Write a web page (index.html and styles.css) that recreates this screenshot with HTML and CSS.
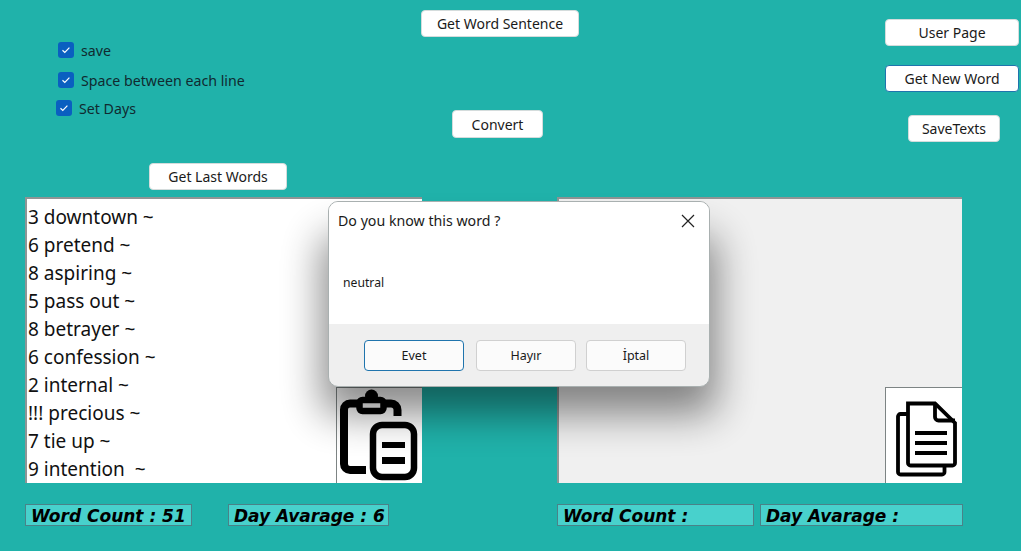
FILE: index.html
```html
<!DOCTYPE html>
<html lang="en">
<head>
  <meta charset="UTF-8" />
  <meta name="viewport" content="width=device-width, initial-scale=1.0" />
  <title>Word Notes</title>
  <link rel="stylesheet" href="styles.css">
</head>
<body>
  <div class="top">
    <div class="top-left">
      <label class="check"><span class="box"><svg viewBox="0 0 16 16"><path d="M4.500 8.300l2.300 2.200 4.600-4.800"/></svg></span>save</label>
      <label class="check check-space"><span class="box"><svg viewBox="0 0 16 16"><path d="M4.500 8.300l2.300 2.200 4.600-4.800"/></svg></span>Space between each line</label>
      <label class="check check-days"><span class="box"><svg viewBox="0 0 16 16"><path d="M4.500 8.300l2.300 2.200 4.600-4.800"/></svg></span>Set Days</label>
      <button class="btn btn-last">Get Last Words</button>
    </div>
    <div class="top-mid">
      <button class="btn btn-sentence">Get Word Sentence</button>
      <button class="btn btn-convert">Convert</button>
    </div>
    <div class="top-right">
      <button class="btn btn-user">User Page</button>
      <button class="btn btn-new">Get New Word</button>
      <button class="btn btn-save">SaveTexts</button>
    </div>
  </div>

  <div class="panels">
    <div class="panel panel-left">
      <div class="words">
        <div>3 downtown ~</div>
        <div>6 pretend ~</div>
        <div>8 aspiring ~</div>
        <div>5 pass out ~</div>
        <div>8 betrayer ~</div>
        <div>6 confession ~</div>
        <div>2 internal ~</div>
        <div>!!! precious ~</div>
        <div>7 tie up ~</div>
        <div>9 intention &nbsp;~</div>
      </div>
      <button class="icon-btn icon-paste">
        <svg viewBox="0 0 85 96" width="85" height="96">
          <path class="thick" d="M24 16.500H14a6 6 0 0 0-6 6V77a6 6 0 0 0 6 6H30M46 16.500H55a6.500 6.500 0 0 1 6.500 6.500V29"/>
          <circle cx="35.500" cy="9" r="6.500"/>
          <rect class="clip" x="23.500" y="13" width="24" height="11" rx="3"/>
          <rect class="sheet" x="37" y="38" width="41" height="52" rx="9"/>
          <rect x="46" y="55" width="23" height="6"/>
          <rect x="46" y="70" width="23" height="7"/>
        </svg>
      </button>
    </div>
    <div class="panel panel-right">
      <button class="icon-btn icon-copy">
        <svg viewBox="0 0 75 94" width="75" height="94">
          <g class="thin">
            <path d="M22 14.500H49L69 34V74a2.500 2.500 0 0 1-2.500 2.500H24.500A2.500 2.500 0 0 1 22 74Z"/>
            <path d="M49 14.500V28a3.500 3.500 0 0 0 3.500 3.500H69"/>
            <path d="M22 25H14.500A2.500 2.500 0 0 0 12 27.500V83a2.500 2.500 0 0 0 2.500 2.500H56a2.500 2.500 0 0 0 2.500-2.500V76.500"/>
            <path d="M29 44H61M29 54H61M29 64H61"/>
          </g>
        </svg>
      </button>
    </div>
  </div>

  <div class="stats">
    <div class="stat stat-a">Word Count : 51</div>
    <div class="stat stat-b">Day Avarage : 6</div>
    <div class="stat stat-c">Word Count :</div>
    <div class="stat stat-d">Day Avarage :</div>
  </div>

  <div class="dialog-shade"></div>
  <div class="dialog">
    <div class="dialog-body">
      <div class="dialog-head">
        <span>Do you know this word ?</span>
        <svg class="close" viewBox="0 0 14 14" width="14" height="14"><path d="M1 1L13 13M13 1L1 13"/></svg>
      </div>
      <p class="dialog-text">neutral</p>
    </div>
    <div class="dialog-foot">
      <button class="dlg-btn dlg-default">Evet</button>
      <button class="dlg-btn">Hayır</button>
      <button class="dlg-btn">İptal</button>
    </div>
  </div>
</body>
</html>
```

FILE: styles.css
```css
body {
  margin: 0;
  height: 551px;
  overflow: hidden;
  position: relative;
  background: #20b2aa;
  font-family: "Noto Sans", "Open Sans", sans-serif;
  color: #111;
}
.top {
  display: flex;
  height: 197px;
}
.top-left {
  width: 421px;
  padding-top: 42px;
  box-sizing: border-box;
}
.top-mid {
  width: 464px;
  padding-top: 10px;
  box-sizing: border-box;
}
.top-right {
  width: 136px;
  padding-top: 19px;
  box-sizing: border-box;
}
.check {
  display: flex;
  align-items: center;
  gap: 7px;
  height: 16px;
  margin-left: 58px;
  font-size: 14.200px;
  color: #102a30;
  white-space: nowrap;
}
.check-space {
  margin-top: 14px;
}
.check-days {
  margin-top: 12px;
  margin-left: 56px;
}
.box {
  width: 16px;
  height: 16px;
  border-radius: 3px;
  background: #0a5fc0;
  flex: none;
}
.box svg {
  display: block;
  width: 16px;
  height: 16px;
}
.box path {
  fill: none;
  stroke: #fff;
  stroke-width: 1.2;
}
.btn {
  display: block;
  box-sizing: border-box;
  height: 27px;
  padding: 0;
  border: 1px solid #d4dcdc;
  border-radius: 4px;
  background: #fff;
  font-family: inherit;
  font-size: 14px;
  color: #1a1a1a;
}
.btn-last {
  width: 138px;
  margin: 47px 0 0 149px;
}
.btn-sentence {
  width: 158px;
  height: 27px;
}
.btn-convert {
  width: 91px;
  height: 28px;
  margin: 73px 0 0 31px;
}
.btn-user {
  width: 134px;
}
.btn-new {
  width: 134px;
  margin-top: 19px;
  border-color: #1f74ad;
}
.btn-save {
  width: 92px;
  margin: 23px 0 0 23px;
}
.panels {
  display: flex;
  gap: 135px;
  height: 286px;
  margin-left: 25px;
}
.panel {
  display: flex;
  justify-content: space-between;
  align-items: flex-end;
  box-sizing: border-box;
  border-top: 2px solid #8f9595;
  border-left: 2px solid #8f9595;
}
.panel-left {
  width: 397px;
  background: #fff;
}
.panel-right {
  width: 405px;
  justify-content: flex-end;
  background: #f0f0f0;
}
.words {
  padding: 0 0 0 1px;
  font-size: 19px;
  line-height: 28px;
  color: #111;
  white-space: nowrap;
}
.icon-btn {
  box-sizing: border-box;
  padding: 0;
  border: 0;
  border-top: 1px solid #7d8484;
  border-left: 1px solid #7d8484;
  background: #fff;
}
.icon-btn svg {
  display: block;
}
.icon-paste {
  width: 86px;
  height: 96px;
}
.icon-paste svg {
  margin: -1px 0 0 -1px;
}
.thick {
  fill: none;
  stroke: #000;
  stroke-width: 8;
}
.clip {
  fill: none;
  stroke: #000;
  stroke-width: 6.500;
}
.sheet {
  fill: none;
  stroke: #000;
  stroke-width: 6.500;
}
.icon-copy {
  width: 77px;
  height: 96px;
}
.thin path {
  fill: none;
  stroke: #000;
  stroke-width: 3.800;
}
.stats {
  display: flex;
  margin: 21px 0 0 25px;
}
.stat {
  box-sizing: border-box;
  height: 22px;
  padding-left: 5px;
  border: 1px solid #4a8288;
  background: #48d1cc;
  font-family: "DejaVu Sans", sans-serif;
  font-size: 17px;
  font-weight: bold;
  font-style: italic;
  line-height: 22px;
  color: #000;
  white-space: nowrap;
}
.stat-a {
  width: 167px;
}
.stat-b {
  width: 161px;
  margin-left: 36px;
}
.stat-c {
  width: 197px;
  margin-left: 168px;
}
.stat-d {
  width: 203px;
  margin-left: 6px;
}
/* soft shadow under the message box */
.dialog-shade {
  position: absolute;
  left: 322px;
  top: 236px;
  width: 394px;
  height: 178px;
  border-radius: 10px;
  background: #000;
  opacity: 0.46;
  filter: blur(20px);
}
.dialog {
  position: absolute;
  left: 328px;
  top: 201px;
  width: 382px;
  height: 186px;
  display: flex;
  flex-direction: column;
  overflow: hidden;
  box-sizing: border-box;
  border: 1px solid #a9b0b0;
  border-radius: 10px;
  background: #efefef;
}
.dialog-body {
  height: 122px;
  background: #fff;
}
.dialog-head {
  display: flex;
  justify-content: space-between;
  align-items: center;
  padding: 9px 14px 0 9px;
  font-size: 14.200px;
  color: #1a1a1a;
}
.close path {
  fill: none;
  stroke: #222;
  stroke-width: 1.2;
}
.dialog-text {
  margin: 44px 0 0 14px;
  font-size: 12.200px;
  color: #1a1a1a;
}
.dialog-foot {
  display: flex;
  gap: 10px;
  padding: 16px 0 0 35px;
}
.dlg-btn {
  box-sizing: border-box;
  width: 100px;
  height: 31px;
  padding: 0;
  border: 1px solid #d0d0d0;
  border-radius: 4px;
  background: #fbfbfb;
  font-family: inherit;
  font-size: 12.500px;
  color: #1a1a1a;
}
.dlg-default {
  margin-right: 2px;
  border-color: #1f74ad;
}
```
